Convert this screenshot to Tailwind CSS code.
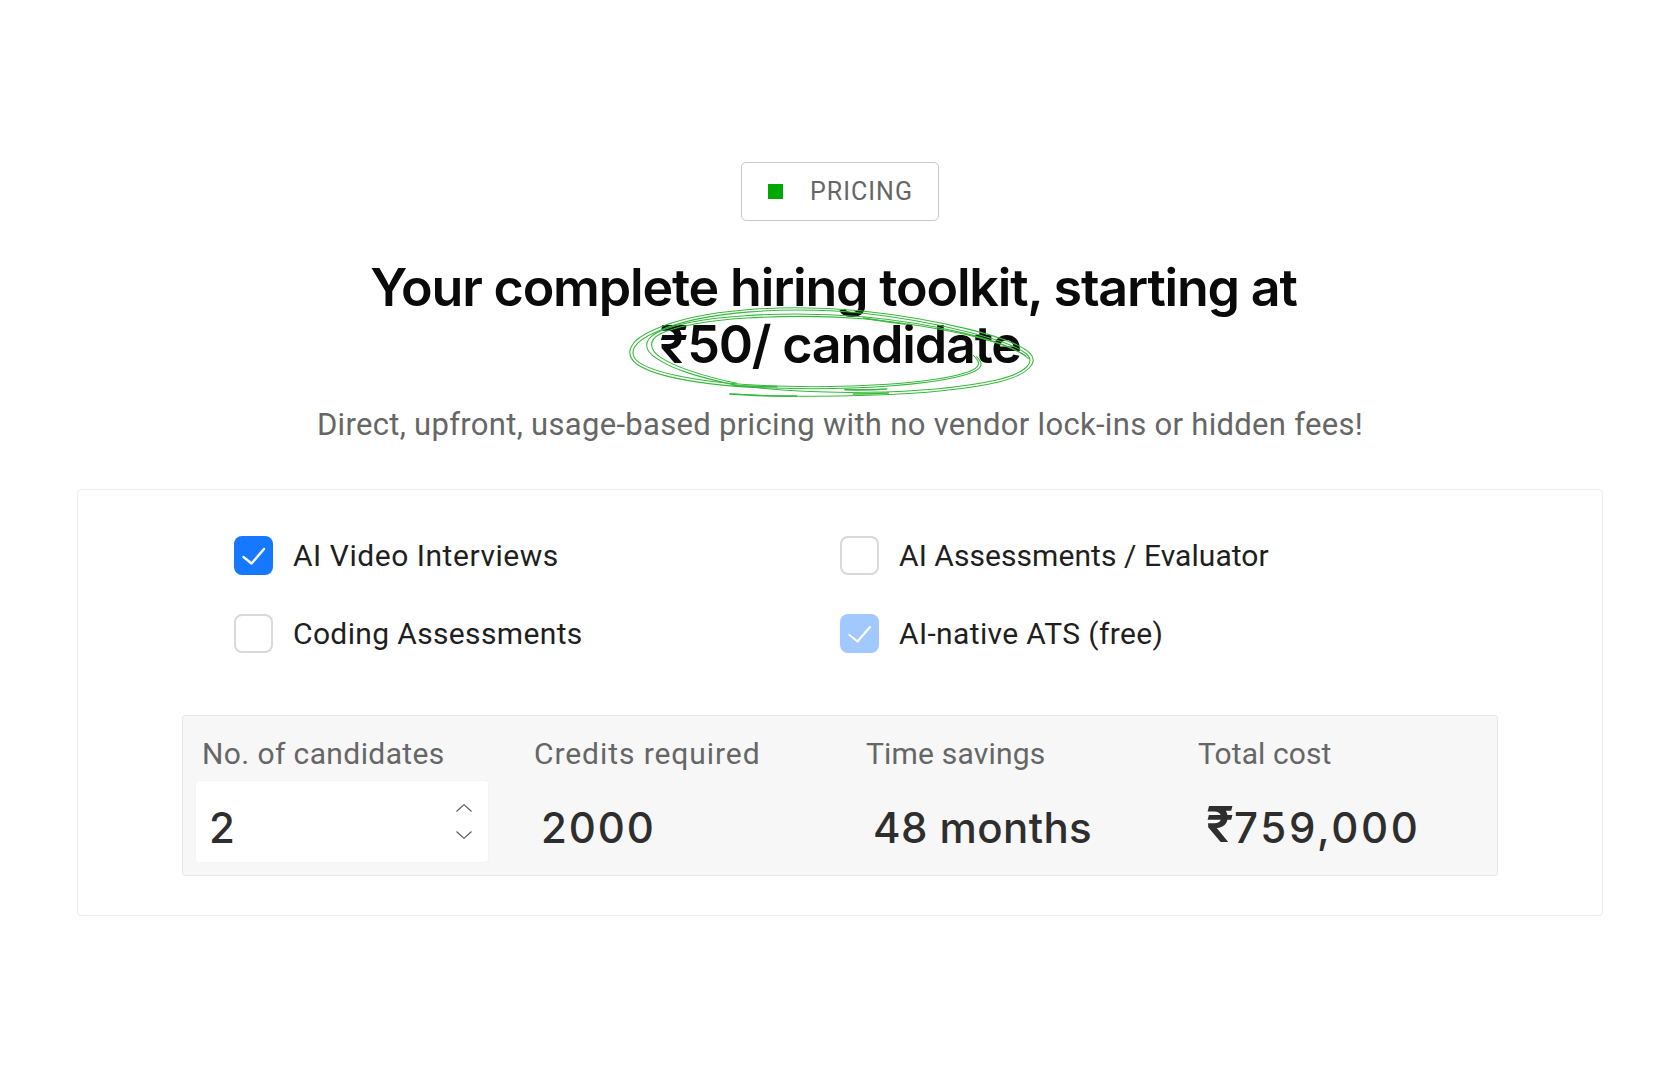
<!DOCTYPE html>
<html>
<head>
    <title>Pricing</title>
    <script src="https://cdn.jsdelivr.net/npm/@tailwindcss/browser@4"></script>
</head>
<body class="bg-white font-['Roboto',sans-serif] overflow-hidden">
    <div class="h-[1078px] flex flex-col items-center pt-[162px]">
        <!-- badge -->
        <div class="w-[198px] h-[59px] flex items-center pl-[26px] gap-[27px] border border-[#c9c9c9] rounded-[5px] text-[25px] tracking-[0.04em] text-[#666666]">
            <span class="w-[15px] h-[15px] bg-[#00a806]"></span>
            <span>PRICING</span>
        </div>

        <!-- heading -->
        <div class="relative w-full mt-[38px] text-center">
            <h1 class="font-['Inter',sans-serif] font-semibold text-[52px] leading-[57px] tracking-[-0.023em] text-[#0a0a0a]">
                <span class="block pr-[13px]">Your complete hiring toolkit, starting at</span>
                <span class="block">₹50/ candidate</span>
            </h1>
            <svg class="absolute left-[calc(50%-240px)] top-[31px] w-[460px] h-[120px] pointer-events-none" viewBox="0 0 1380 360" fill="none" stroke="#38b93e" stroke-width="3.2" stroke-linecap="round">
                <path d="M390 312C620 325 1000 322 1200 275C1290 252 1315 215 1290 190C1240 140 1000 85 780 62C560 42 300 55 160 120C90 150 70 190 110 222C170 265 340 290 520 294C760 302 1010 285 1110 250C1150 235 1150 220 1130 200"/>
                <path d="M400 284C620 318 980 316 1190 270C1282 248 1306 216 1280 192C1230 148 990 92 790 70C570 48 310 62 170 125C100 154 80 190 118 218C180 258 350 283 530 288C760 296 1000 280 1104 246C1142 232 1144 218 1120 196"/>
                <path d="M1285 205C1220 150 1000 100 790 80C560 62 280 74 170 128C130 150 130 180 170 205C220 240 300 262 400 284"/>
                <path d="M1278 198C1210 150 1000 106 790 86C560 70 290 82 180 132C146 150 146 178 182 202C230 234 310 258 410 280"/>
                <path d="M790 84C840 92 880 98 915 102" stroke-width="5"/>
                <path d="M400 286C440 290 490 290 530 290M735 299C780 300 820 300 860 297M390 312C450 316 530 320 590 318M760 312C800 312 830 311 865 309" stroke-width="5"/>
            </svg>
        </div>
        <p class="mt-[32px] text-[31px] leading-[40px] tracking-[0.01em] text-[#666666]">Direct, upfront, usage-based pricing with no vendor lock-ins or hidden fees!</p>

        <!-- calculator card -->
        <div class="mt-[44px] w-[1526px] h-[427px] border border-[#ececec] rounded-[4px] pt-[46px]">
            <div class="grid grid-cols-[606px_605px] gap-y-[39px] pl-[156px] text-[30px] text-[#1f1f1f]">
                <label class="flex items-center gap-[20px] h-[39px] tracking-[0.018em]">
                    <span class="w-[39px] h-[39px] rounded-[8px] bg-[#1677ff]">
                        <svg class="w-[39px] h-[39px]" viewBox="0 0 39 39" fill="none" stroke="#ffffff" stroke-width="2.4" stroke-linecap="round" stroke-linejoin="round"><path d="M9.5 21l8 6.5L30 13"/></svg>
                    </span>
                    AI Video Interviews
                </label>
                <label class="flex items-center gap-[20px] h-[39px] tracking-[0.002em]">
                    <span class="w-[39px] h-[39px] rounded-[8px] border-2 border-[#d9d9d9] bg-white"></span>
                    AI Assessments / Evaluator
                </label>
                <label class="flex items-center gap-[20px] h-[39px] tracking-[0.012em]">
                    <span class="w-[39px] h-[39px] rounded-[8px] border-2 border-[#d9d9d9] bg-white"></span>
                    Coding Assessments
                </label>
                <label class="flex items-center gap-[20px] h-[39px] tracking-[0.012em]">
                    <span class="w-[39px] h-[39px] rounded-[8px] bg-[#a2c9ff]">
                        <svg class="w-[39px] h-[39px]" viewBox="0 0 39 39" fill="none" stroke="#ffffff" stroke-width="2.2" stroke-linecap="round" stroke-linejoin="round"><path d="M9.5 21l8 6.5L30 13"/></svg>
                    </span>
                    AI-native ATS (free)
                </label>
            </div>

            <!-- stats -->
            <div class="mx-[104px] mt-[62px] h-[161px] grid grid-cols-[332px_332px_332px_1fr] bg-[#f7f7f7] border border-[#e6e6e6] rounded-[3px] pl-[13px]">
                <div class="flex flex-col">
                    <div class="pl-[6px] pt-[18px] h-[65px] text-[30px] leading-[40px] tracking-[0.013em] text-[#666666]">No. of candidates</div>
                    <div class="w-[292px] h-[81px] flex items-center justify-between pl-[13px] pr-[16px] bg-white rounded-[2px] shadow-[0_0_1px_rgba(0,0,0,0.15)]">
                        <span class="pt-[12px] font-['Inter',sans-serif] font-medium text-[42px] leading-[50px] text-[#2e2e2e]">2</span>
                        <span class="flex flex-col gap-[19px]">
                            <svg class="w-[16px] h-[8px]" viewBox="0 0 16 8" fill="none" stroke="#555555" stroke-width="1.1"><path d="M.5 7.5L8 .7l7.5 6.8"/></svg>
                            <svg class="w-[16px] h-[8px]" viewBox="0 0 16 8" fill="none" stroke="#555555" stroke-width="1.1"><path d="M.5.5L8 7.3 15.5.5"/></svg>
                        </span>
                    </div>
                </div>
                <div class="flex flex-col">
                    <div class="pl-[6px] pt-[18px] h-[65px] text-[30px] leading-[40px] tracking-[0.031em] text-[#666666]">Credits required</div>
                    <div class="h-[81px] flex items-center pt-[12px] pl-[13px] font-['Inter',sans-serif] font-medium text-[42px] tracking-[0.045em] text-[#2e2e2e]">2000</div>
                </div>
                <div class="flex flex-col">
                    <div class="pl-[6px] pt-[18px] h-[65px] text-[30px] leading-[40px] tracking-[0.006em] text-[#666666]">Time savings</div>
                    <div class="h-[81px] flex items-center pt-[12px] pl-[13px] font-['Inter',sans-serif] font-medium text-[42px] tracking-[0.01em] text-[#2e2e2e]">48 months</div>
                </div>
                <div class="flex flex-col">
                    <div class="pl-[6px] pt-[18px] h-[65px] text-[30px] leading-[40px] tracking-[0.003em] text-[#666666]">Total cost</div>
                    <div class="h-[81px] flex items-center pt-[12px] pl-[14px] font-['Inter',sans-serif] font-medium text-[42px] tracking-[0.063em] text-[#2e2e2e]"><span class="text-[50px] leading-[50px] font-semibold tracking-normal -mt-[8px]">₹</span>759,000</div>
                </div>
            </div>
        </div>
    </div>
</body>
</html>
